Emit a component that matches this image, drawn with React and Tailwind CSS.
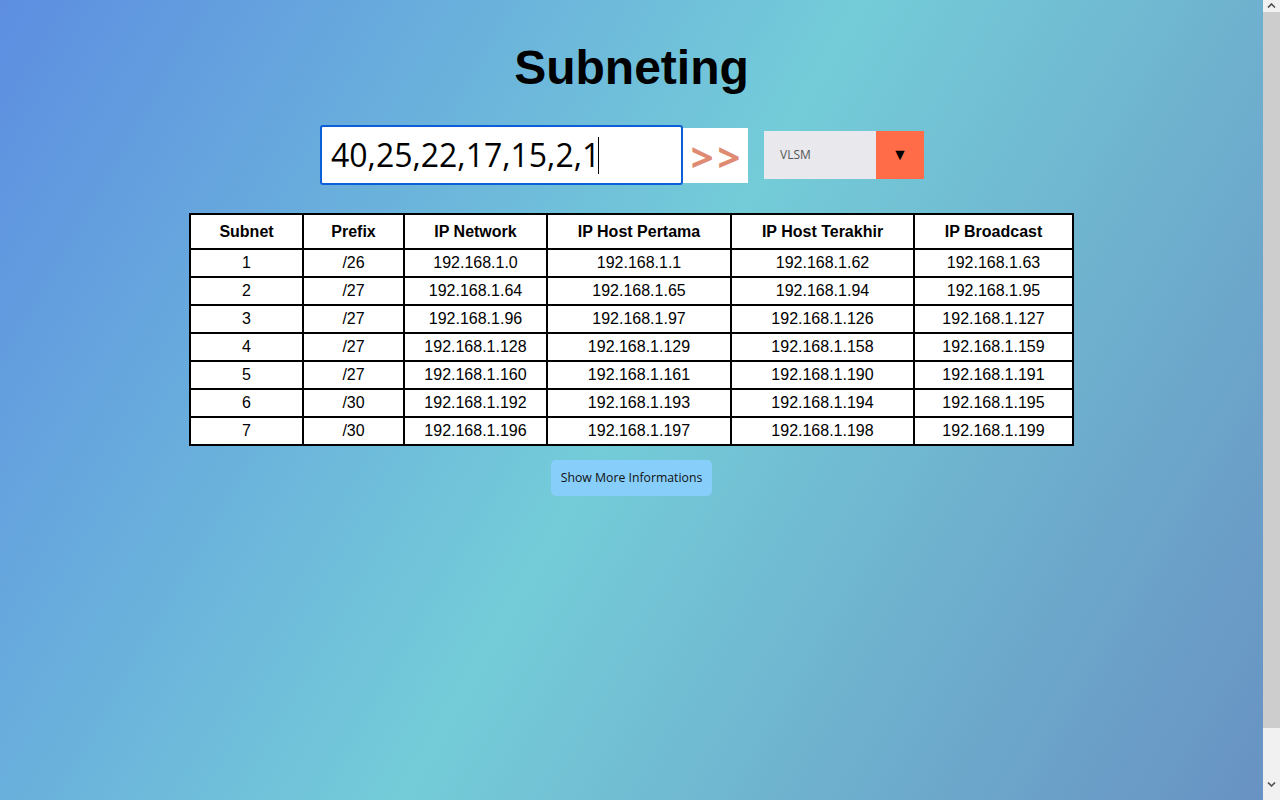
import React from "react";

const rows = [
  ["1", "/26", "192.168.1.0", "192.168.1.1", "192.168.1.62", "192.168.1.63"],
  ["2", "/27", "192.168.1.64", "192.168.1.65", "192.168.1.94", "192.168.1.95"],
  ["3", "/27", "192.168.1.96", "192.168.1.97", "192.168.1.126", "192.168.1.127"],
  ["4", "/27", "192.168.1.128", "192.168.1.129", "192.168.1.158", "192.168.1.159"],
  ["5", "/27", "192.168.1.160", "192.168.1.161", "192.168.1.190", "192.168.1.191"],
  ["6", "/30", "192.168.1.192", "192.168.1.193", "192.168.1.194", "192.168.1.195"],
  ["7", "/30", "192.168.1.196", "192.168.1.197", "192.168.1.198", "192.168.1.199"],
];

const headers = ["Subnet", "Prefix", "IP Network", "IP Host Pertama", "IP Host Terakhir", "IP Broadcast"];
const widths = ["w-[113px]", "w-[101px]", "w-[143px]", "w-[184px]", "w-[183px]", "w-[159px]"];

function Scrollbar() {
  return (
    <div className="w-[17px] h-[800px] shrink-0 bg-[#f1f1f1] flex flex-col">
      <div className="h-[12px] flex items-start justify-center pt-[3px]">
        <svg width="9" height="5" viewBox="0 0 9 5">
          <path d="M1 4.5 L4.5 1 L8 4.5" fill="none" stroke="#505050" strokeWidth="1.6" />
        </svg>
      </div>
      <div className="h-[716px] bg-[#cdcdcd]" />
      <div className="flex-1 flex items-end justify-center pb-[13px]">
        <svg width="9" height="5" viewBox="0 0 9 5">
          <path d="M1 0.5 L4.5 4 L8 0.5" fill="none" stroke="#505050" strokeWidth="1.6" />
        </svg>
      </div>
    </div>
  );
}

export default function App() {
  return (
    <div className="h-[800px] w-full overflow-hidden flex font-['Liberation_Sans',Arial,sans-serif] text-black">
      <div className="flex-1 h-full bg-[linear-gradient(120deg,#5d8ee1_0%,#74ccd8_50%,#6892c3_100%)] flex flex-col items-center pt-[44px]">
        <h1 className="text-[48px] leading-none font-bold">Subneting</h1>

        <div className="mt-[33px] flex items-center pr-[19px]">
          <div className="w-[363px] h-[60px] border-2 border-[#0b60d8] rounded-[3px] bg-white flex items-center pl-[9px] font-['Open_Sans','Noto_Sans',sans-serif] text-[32px] leading-none">
            <span>40,25,22,17,15,2,1</span>
            <span className="-ml-[2px] w-px h-[37px] bg-black" />
          </div>
          <div className="w-[65px] h-[55px] bg-white flex items-center justify-center font-['Open_Sans','Noto_Sans',sans-serif] font-bold text-[40px] leading-none tracking-[4px] text-[#df8b74] pt-[3px] pl-[4px]">
            &gt;&gt;
          </div>
          <div className="ml-[16px] w-[160px] h-[48px] flex">
            <div className="flex-1 bg-[#e9e9ed] flex items-center pl-[16px] text-[12px] text-[#555] font-['Open_Sans','Noto_Sans',sans-serif]">
              VLSM
            </div>
            <div className="w-[48px] bg-[#ff6c47] flex items-center justify-center text-[16px] text-black">
              ▼
            </div>
          </div>
        </div>

        <table className="mt-[28px] border-collapse border-2 border-black bg-white text-[16px] text-center">
          <thead>
            <tr>
              {headers.map((h, i) => (
                <th key={h} className={`${widths[i]} border-2 border-black py-[6px] leading-[21px] font-bold`}>
                  {h}
                </th>
              ))}
            </tr>
          </thead>
          <tbody>
            {rows.map((r) => (
              <tr key={r[0]}>
                {r.map((c, i) => (
                  <td key={i} className="border-2 border-black py-[3px] leading-[20px] font-normal">
                    {c}
                  </td>
                ))}
              </tr>
            ))}
          </tbody>
        </table>

        <button className="mt-[14px] w-[161px] h-[36px] rounded-[5px] bg-[#87cefa] text-[12.25px] text-[#111] font-['Open_Sans','Noto_Sans',sans-serif]">
          Show More Informations
        </button>
      </div>
      <Scrollbar />
    </div>
  );
}
